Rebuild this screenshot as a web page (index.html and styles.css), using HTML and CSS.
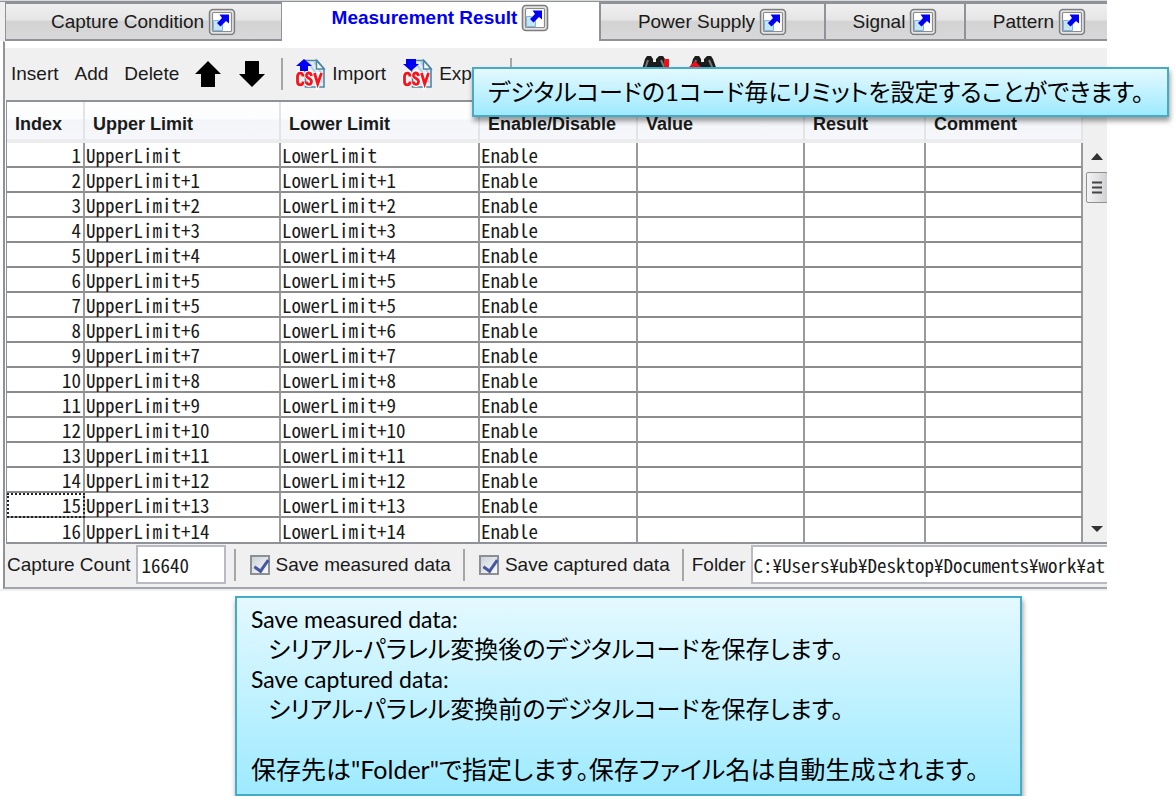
FILE: index.html
```
<!DOCTYPE html>
<html lang="ja">
<head>
<meta charset="utf-8">
<title>Measurement Result</title>
<link rel="stylesheet" href="styles.css">
</head>
<body>
<svg class="defs" aria-hidden="true">
  <defs>
    <symbol id="popout" viewBox="0 0 28 28">
      <rect x="1" y="1" width="26" height="26" rx="4" fill="#fff" stroke="#fff"/>
      <rect x="1.500" y="1.500" width="25" height="25" rx="3.500" fill="#e4e4e4" stroke="#7c7c7c" stroke-width="1.600"/>
      <rect x="4.500" y="4.500" width="19" height="19" rx="1" fill="#fff" stroke="#8c8c8c" stroke-width="1.200"/>
      <path d="M5.500 12.500h5l4 4v6h-9z" fill="#c4e6f4" stroke="#7fb4e4"/>
      <path d="M11.500 6.500h9.500v9l-3-2.500-5.500 5.500-3.500-3.500 5-5z" fill="#0000f4"/>
    </symbol>
    <symbol id="csv-page" viewBox="0 0 32 32">
      <path d="M9 2.500h13l7 8v18.500H10.500V20z" fill="#e2eef4" stroke="#4f86a4" stroke-width="1.600"/>
      <path d="M13 4l14 20M19 4l8 12" stroke="#b4d2e0" stroke-width="2"/>
      <path d="M21.500 2.500v8.500H29z" fill="#fff" stroke="#4f86a4" stroke-width="1.500"/>
      <g fill="none" stroke="#fff" stroke-width="5"><path d="M7.500 17.500c0-4-5-4-5 0v6c0 4 5 4 5 0M16.500 17c-1-4-5.500-3-5 .5.500 3 5 2.500 5 6 0 4-5 3.500-5.300.500M19.500 14.500l3 11.500 3-11.500"/></g>
      <g fill="none" stroke="#f8141c" stroke-width="2.800"><path d="M8 18.500c0-4.500-5.500-4.500-5.500 0v5c0 4.500 5.500 4.500 5.500 0M16.500 18c-1-4.500-5.500-3.500-5 0 .5 2.500 5 2 5 5.500 0 4-5 3.500-5.300 0M19.500 15l3.200 11 3.800-11"/></g>
    </symbol>
    <symbol id="binoculars" viewBox="0 0 32 28">
      <path d="M7 2h4l2 3v3h3V5l3-3h4l2 3 5 14v7h-11v-8h-5v8H1v-7L5 5z" fill="#1c1c1c"/>
      <path d="M8 6l-3 9M21 6l4 9" stroke="#777" stroke-width="2"/>
    </symbol>
  </defs>
</svg>

<main class="window">
  <div class="strip" aria-hidden="true"></div>
  <nav class="tabs">
    <div class="tab tab-capture"><button class="tab-name">Capture Condition</button><button class="pop" aria-label="Detach Capture Condition"><svg><use href="#popout"/></svg></button></div>
    <div class="tab tab-active"><button class="tab-name">Measurement Result</button><button class="pop" aria-label="Detach Measurement Result"><svg><use href="#popout"/></svg></button></div>
    <div class="tab tab-power"><button class="tab-name">Power Supply</button><button class="pop" aria-label="Detach Power Supply"><svg><use href="#popout"/></svg></button></div>
    <div class="tab tab-signal"><button class="tab-name">Signal</button><button class="pop" aria-label="Detach Signal"><svg><use href="#popout"/></svg></button></div>
    <div class="tab tab-pattern"><button class="tab-name">Pattern</button><button class="pop" aria-label="Detach Pattern"><svg><use href="#popout"/></svg></button></div>
  </nav>

  <section class="panel">
    <div class="toolbar">
      <button>Insert</button>
      <button>Add</button>
      <button>Delete</button>
      <button class="arrow" aria-label="Move up"><svg viewBox="0 0 26 28"><path d="M13 1L26 14h-6v13H6V14H0z"/></svg></button>
      <button class="arrow" aria-label="Move down"><svg viewBox="0 0 26 28"><path d="M13 27L26 14h-6V1H6v13H0z"/></svg></button>
      <span class="rule"></span>
      <button class="csv"><svg viewBox="0 0 32 32"><use href="#csv-page"/><path d="M9 1l8 7h-4v5H5V8H1z" fill="#0000f4"/></svg>Import</button>
      <button class="csv"><svg viewBox="0 0 32 32"><use href="#csv-page"/><path d="M9 13l8-7h-3V1H4v5H1z" fill="#0000f4"/></svg>Export</button>
      <span class="rule"></span>
      <button>Search Fail</button>
      <button class="find" aria-label="Find next"><svg viewBox="0 0 32 28"><use href="#binoculars"/><path d="M24 5h5v10h-5z" fill="#f01018"/></svg></button>
      <button class="find" aria-label="Find previous"><svg viewBox="0 0 32 28"><use href="#binoculars"/><path d="M7 7l7 7H0z" fill="#f01018"/></svg></button>
    </div>

    <div class="grid">
      <table>
        <colgroup><col class="c-index"><col class="c-upper"><col class="c-lower"><col class="c-enable"><col class="c-value"><col class="c-result"><col></colgroup>
        <thead><tr><th>Index</th><th>Upper Limit</th><th>Lower Limit</th><th>Enable/Disable</th><th>Value</th><th>Result</th><th>Comment</th></tr></thead>
        <tbody>
          <tr><td>1</td><td>UpperLimit</td><td>LowerLimit</td><td>Enable</td><td></td><td></td><td></td></tr>
          <tr><td>2</td><td>UpperLimit+1</td><td>LowerLimit+1</td><td>Enable</td><td></td><td></td><td></td></tr>
          <tr><td>3</td><td>UpperLimit+2</td><td>LowerLimit+2</td><td>Enable</td><td></td><td></td><td></td></tr>
          <tr><td>4</td><td>UpperLimit+3</td><td>LowerLimit+3</td><td>Enable</td><td></td><td></td><td></td></tr>
          <tr><td>5</td><td>UpperLimit+4</td><td>LowerLimit+4</td><td>Enable</td><td></td><td></td><td></td></tr>
          <tr><td>6</td><td>UpperLimit+5</td><td>LowerLimit+5</td><td>Enable</td><td></td><td></td><td></td></tr>
          <tr><td>7</td><td>UpperLimit+5</td><td>LowerLimit+5</td><td>Enable</td><td></td><td></td><td></td></tr>
          <tr><td>8</td><td>UpperLimit+6</td><td>LowerLimit+6</td><td>Enable</td><td></td><td></td><td></td></tr>
          <tr><td>9</td><td>UpperLimit+7</td><td>LowerLimit+7</td><td>Enable</td><td></td><td></td><td></td></tr>
          <tr><td>10</td><td>UpperLimit+8</td><td>LowerLimit+8</td><td>Enable</td><td></td><td></td><td></td></tr>
          <tr><td>11</td><td>UpperLimit+9</td><td>LowerLimit+9</td><td>Enable</td><td></td><td></td><td></td></tr>
          <tr><td>12</td><td>UpperLimit+10</td><td>LowerLimit+10</td><td>Enable</td><td></td><td></td><td></td></tr>
          <tr><td>13</td><td>UpperLimit+11</td><td>LowerLimit+11</td><td>Enable</td><td></td><td></td><td></td></tr>
          <tr><td>14</td><td>UpperLimit+12</td><td>LowerLimit+12</td><td>Enable</td><td></td><td></td><td></td></tr>
          <tr><td class="focused">15</td><td>UpperLimit+13</td><td>LowerLimit+13</td><td>Enable</td><td></td><td></td><td></td></tr>
          <tr><td>16</td><td>UpperLimit+14</td><td>LowerLimit+14</td><td>Enable</td><td></td><td></td><td></td></tr>
        </tbody>
      </table>
      <div class="scroll">
        <button aria-label="Scroll up"><svg viewBox="0 0 12 8"><path d="M6 0l6 7H0z"/></svg></button>
        <div class="thumb"><svg viewBox="0 0 10 14"><path d="M0 1.500h10M0 6.500h10M0 11.500h10"/></svg></div>
        <button class="down" aria-label="Scroll down"><svg viewBox="0 0 12 8"><path d="M6 7l6-6H0z"/></svg></button>
      </div>
    </div>

    <div class="footer">
      <label for="count">Capture Count</label>
      <input id="count" class="count" type="text" value="16640">
      <span class="rule"></span>
      <label class="check"><input type="checkbox" checked>Save measured data</label>
      <span class="rule"></span>
      <label class="check"><input type="checkbox" checked>Save captured data</label>
      <span class="rule"></span>
      <label for="folder">Folder</label>
      <input id="folder" class="folder" type="text" value="C:¥Users¥ub¥Desktop¥Documents¥work¥at">
    </div>
  </section>
</main>

<aside class="note note-limit">デジタルコードの1コード毎にリミットを設定することができます。</aside>

<aside class="note note-save">
  <p class="term">Save measured data:</p>
  <p class="indent">シリアル-パラレル変換後のデジタルコードを保存します。</p>
  <p class="term">Save captured data:</p>
  <p class="indent">シリアル-パラレル変換前のデジタルコードを保存します。</p>
  <p class="last">保存先は"Folder"で指定します。保存ファイル名は自動生成されます。</p>
</aside>
</body>
</html>
```
FILE: styles.css
```
* { box-sizing: border-box; }
body {
  margin: 0;
  position: relative;
  background: #fff;
  color: #1a1a1a;
  font: 19px/24px "Liberation Sans", Arial, sans-serif;
}
button {
  border: 0;
  padding: 0;
  background: none;
  color: inherit;
  font: inherit;
  white-space: nowrap;
}
svg { display: block; }
.defs { position: absolute; width: 0; height: 0; }

.window {
  margin-right: 69px;
  background: #fff;
  border-bottom: 2px solid #f0f0f0;
  overflow: hidden;
}

/* tabs */
.strip {
  height: 3px;
  border-bottom: 2px solid #8f9298;
  background: #d8d8d8;
}
.tabs {
  display: flex;
  height: 39px;
  margin-top: -1px;
  border-left: 5px solid #f0f0f0;
}
.tab {
  display: flex;
  align-items: center;
  justify-content: center;
  gap: 4px;
  border: 2px solid #8f9298;
  border-right-width: 1px;
  border-left-width: 1px;
  background: linear-gradient(#efefef 0, #e6e6e6 45%, #d3d3d3 50%, #d8d8d8 100%);
}
.pop svg { width: 28px; height: 28px; }
.tab-capture { flex: 0 0 277px; }
.tab-active {
  flex: 0 0 317px;
  padding-bottom: 8px;
  border: 0;
  background: #fff;
  color: #0000f4;
  font-weight: bold;
}
.tab-power { flex: 0 0 226px; border-left-width: 2px; }
.tab-signal { flex: 0 0 140px; }
.tab-pattern { flex: 1; padding-left: 6px; border-right: 0; }

/* panel */
.panel {
  margin-left: 3px;
  padding-top: 6px;
  border-top: 1px solid #a2a5ad;
  border-left: 2px solid #8f9298;
  border-bottom: 2px solid #a2a5ad;
}
.tabs + .panel { border-top-color: #fff; }
.toolbar {
  display: flex;
  align-items: center;
  gap: 16px;
  height: 52px;
  padding-left: 6px;
  background: #f0f0f0;
}
.rule { flex: none; width: 2px; height: 32px; background: #a6a6a6; }
.arrow svg { width: 26px; height: 28px; }
.arrow + .arrow { margin-left: 2px; }
.csv { display: flex; align-items: center; gap: 5px; }
.csv svg { width: 32px; height: 32px; }
.toolbar .rule + .csv { margin-left: -4px; }
.find { align-self: flex-start; padding-top: 6px; }
.find svg { width: 32px; height: 28px; }

/* grid */
.grid {
  display: flex;
  margin-left: 1px;
  border-top: 2px solid #8f9298;
  border-bottom: 2px solid #8f9298;
  border-left: 1px solid #8f9298;
  background: #f0f0f0;
}
table {
  flex: 1;
  table-layout: fixed;
  border-collapse: separate;
  border-spacing: 0;
  width: 0;
}
.c-index { width: 78px; }
.c-upper { width: 196px; }
.c-lower { width: 199px; }
.c-enable { width: 158px; }
.c-value { width: 167px; }
.c-result { width: 121px; }
th {
  height: 41px;
  padding: 7px 0 0 8px;
  border-right: 2px solid #e2e4e6;
  border-bottom: 4px solid #ececee;
  background: linear-gradient(#fff 0, #fcfdfe 45%, #f3f5f8 50%, #f5f7fa 100%);
  font-size: 18px;
  line-height: 24px;
  text-align: left;
}
td {
  height: 25px;
  padding: 0 1px;
  border-right: 2px solid #9a9a9a;
  border-bottom: 2px solid #8c8c8c;
  background: #fff;
  line-height: 23px;
  white-space: nowrap;
}
td, .count, .folder {
  font-family: "Noto Sans CJK JP", monospace;
  font-size: 19px;
  font-feature-settings: "hwid";
}
tr:last-child td { height: 24px; border-bottom: 0; }
td:first-child { text-align: right; padding-right: 2px; }
.focused { outline: 2px dotted #222; outline-offset: -2px; }
.scroll {
  display: flex;
  flex-direction: column;
  align-items: center;
  width: 24px;
  padding: 51px 0 9px 3px;
}
.scroll button svg { width: 12px; height: 8px; fill: #333; }
.thumb {
  display: flex;
  align-items: center;
  justify-content: center;
  width: 22px;
  height: 31px;
  margin-top: 11px;
  border: 1px solid #909090;
  border-radius: 2px;
  background: linear-gradient(90deg, #f4f4f4, #d2d2d6);
}
.thumb svg { width: 10px; height: 14px; stroke: #444; stroke-width: 2; }
.down { margin-top: auto; }

/* footer */
.footer {
  display: flex;
  align-items: center;
  height: 43px;
  padding: 0 0 2px 2px;
  background: #f0f0f0;
}
.footer label { white-space: nowrap; }
.footer .rule { margin: 0 8px; }
.count, .folder {
  height: 39px;
  margin-left: 5px;
  padding: 0 4px;
  border: 2px solid #b9bbc4;
  background: #fff;
  color: #1a1a1a;
}
.count { width: 90px; }
.folder { flex: 1; min-width: 0; padding: 0 1px; border-right: 0; }
.check { display: flex; align-items: center; gap: 6px; padding: 0 4px; }
.check input {
  appearance: none;
  width: 20px;
  height: 20px;
  margin: 0 0 0 2px;
  border: 2px solid #8c8f94;
  background: linear-gradient(135deg, #ccd2dc, #fafafa);
  position: relative;
}
.check input:checked::after {
  content: "";
  position: absolute;
  left: 5px;
  top: 0;
  width: 6px;
  height: 12px;
  border: solid #4458a0;
  border-width: 0 3px 3px 0;
  transform: rotate(35deg);
}

/* callouts */
.note {
  border: 2px solid #45abc6;
  background: linear-gradient(#e4f9ff, #9eeaff);
  box-shadow: 1px 4px 5px rgba(0, 0, 0, .4);
  color: #000;
  font: 24px/30px Lato, "Noto Sans CJK JP", sans-serif;
  font-feature-settings: "palt";
  white-space: nowrap;
}
.note-limit {
  position: absolute;
  top: 67px;
  right: 7px;
  width: 697px;
  padding: 8px 14px;
}
.note-save {
  width: 787px;
  margin: 5px 0 0 235px;
  padding: 6px 14px 10px;
}
.note p { margin: 0; }
.note .term { font-size: 23px; }
.note .indent { padding-left: 17px; }
.note .last { padding-top: 30px; font-size: 25px; }
```
